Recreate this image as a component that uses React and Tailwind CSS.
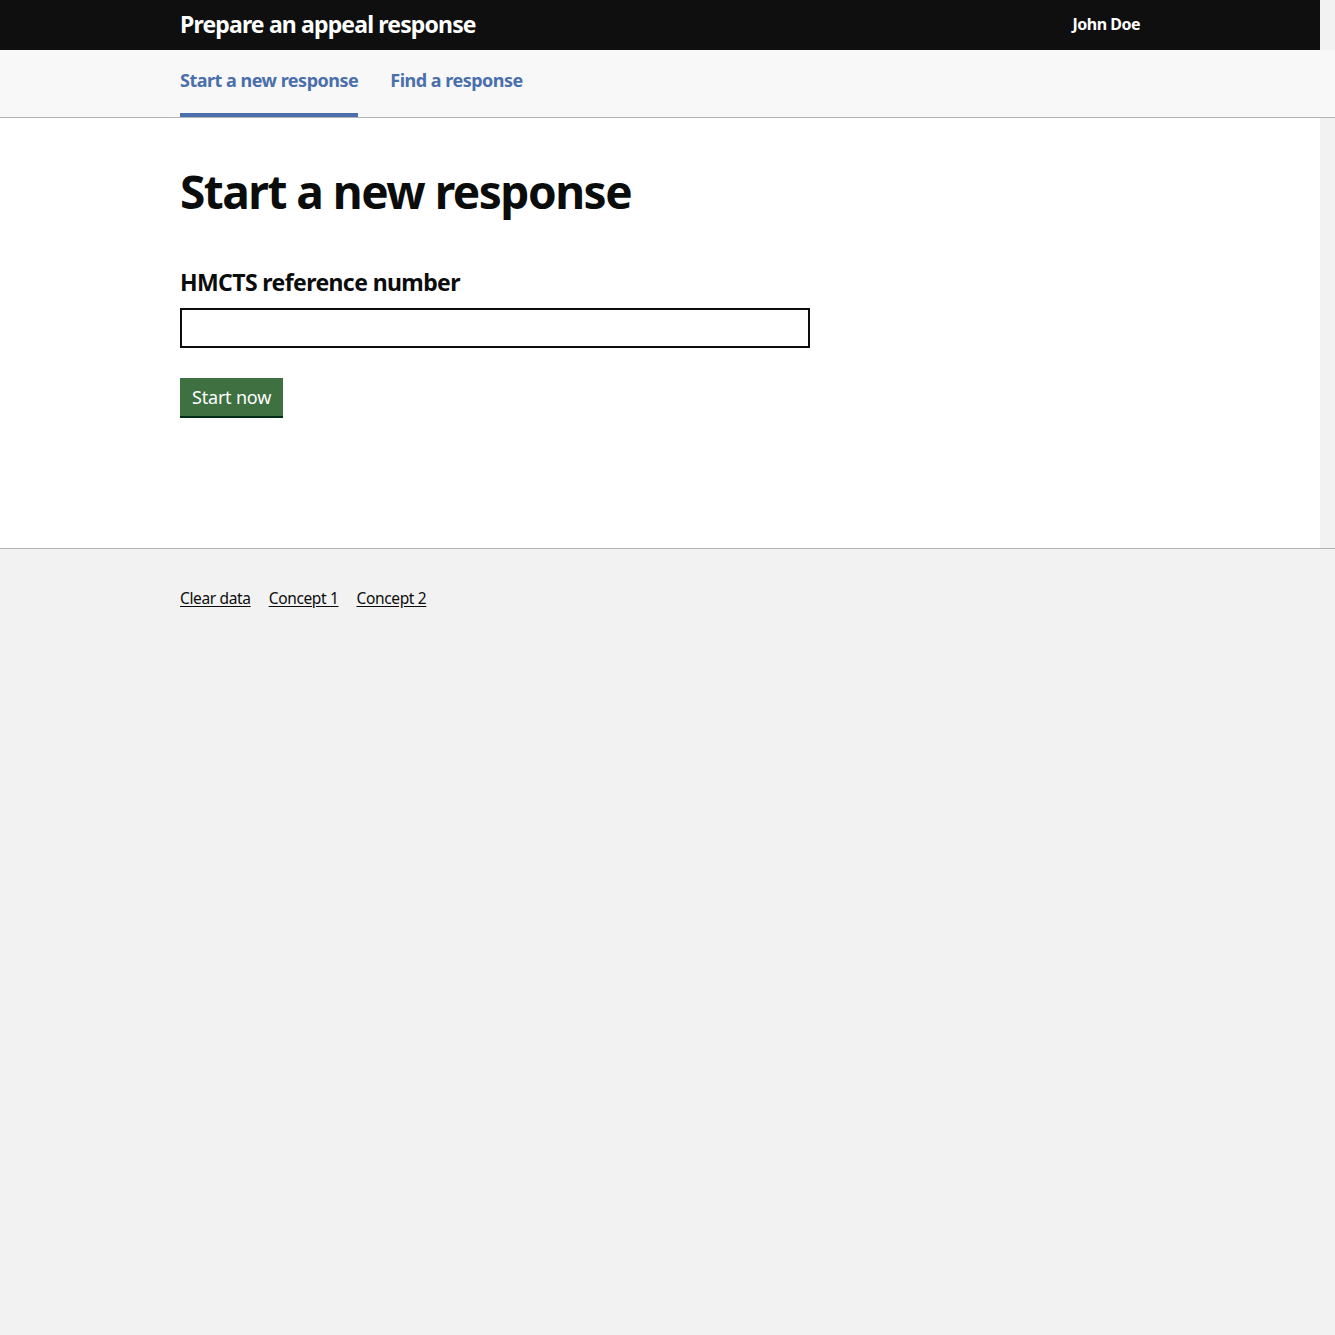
import React from 'react';

export default function App() {
  const font = { fontFamily: '"Noto Sans", "Liberation Sans", Arial, sans-serif' };
  return (
    <div className="min-h-[1335px] bg-[#f2f2f2] text-[#0b0c0c]" style={font}>
      {/* Header */}
      <header className="w-[1320px] h-[50px] bg-[#0f0f0f]">
        <div className="w-[960px] mx-auto h-full flex items-center justify-between pb-[2px]">
          <span className="text-white font-bold text-[23px] tracking-[-0.85px]">Prepare an appeal response</span>
          <span className="text-white font-bold text-[16px] tracking-[-0.5px]">John Doe</span>
        </div>
      </header>

      {/* Sub navigation */}
      <nav className="h-[68px] bg-[#f8f8f8] border-b border-[#b1b4b6]">
        <div className="w-[960px] mx-[180px] h-full flex gap-8">
          <a className="h-full flex items-center pb-[2px] text-[#4a6fab] font-bold text-[18px] tracking-[-0.5px] border-b-[4px] border-[#4a6fab]" href="#">
            Start a new response
          </a>
          <a className="h-full flex items-center pb-[2px] text-[#4a6fab] font-bold text-[18px] tracking-[-0.5px] border-b-[4px] border-transparent" href="#">
            Find a response
          </a>
        </div>
      </nav>

      {/* Main */}
      <main className="w-[1320px] bg-white h-[430px]">
        <div className="w-[960px] mx-auto pt-[43px]">
          <h1 className="font-bold text-[46px] leading-[60px] tracking-[-1.5px]">Start a new response</h1>
          <label className="block mt-[46px] font-bold text-[23px] leading-[30px] tracking-[-0.6px]">HMCTS reference number</label>
          <input type="text" className="mt-[11px] block w-[630px] h-[40px] border-2 border-[#0b0c0c] bg-white outline-none" />
          <button className="mt-[30px] h-[38px] px-[12px] bg-[#3e7042] text-white text-[18px] tracking-[-0.2px] shadow-[0_2px_0_#002d18]">
            Start now
          </button>
        </div>
      </main>

      {/* Footer */}
      <footer className="border-t border-[#b1b4b6] bg-[#f2f2f2] h-[786px]">
        <div className="w-[960px] mx-[180px] pt-[38px] flex gap-[18px] text-[15.5px] tracking-[-0.35px]">
          <a href="#" className="underline underline-offset-2 text-[#0b0c0c]">Clear data</a>
          <a href="#" className="underline underline-offset-2 text-[#0b0c0c]">Concept 1</a>
          <a href="#" className="underline underline-offset-2 text-[#0b0c0c]">Concept 2</a>
        </div>
      </footer>
    </div>
  );
}
